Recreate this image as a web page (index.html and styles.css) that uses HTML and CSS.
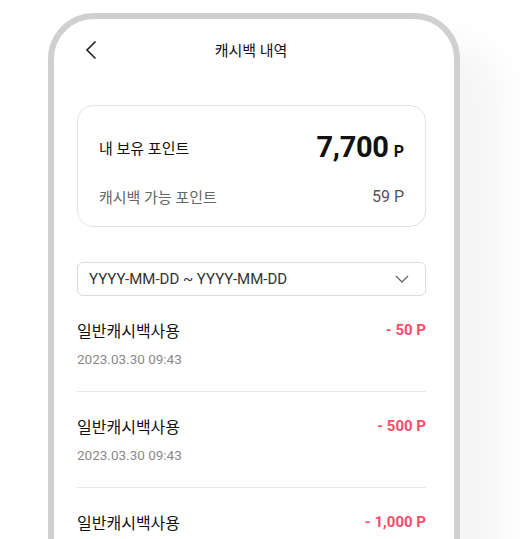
FILE: index.html
```html
<!DOCTYPE html>
<html lang="ko">
<head>
<meta charset="utf-8">
<link rel="stylesheet" href="styles.css">
</head>
<body>
<div class="phone">
  <header class="header">
    <svg class="back" width="12" height="20" viewBox="0 0 12 20"><path d="M10.5 1.5 L2 10 L10.5 18.5" fill="none" stroke="#222" stroke-width="1.6"/></svg>
    <h1 class="title">캐시백 내역</h1>
  </header>
  <main class="content">
    <section class="card">
      <div class="row">
        <span class="label">내 보유 포인트</span>
        <span class="total"><b>7,700</b><small>P</small></span>
      </div>
      <div class="row sub">
        <span class="label">캐시백 가능 포인트</span>
        <span class="avail">59 P</span>
      </div>
    </section>
    <div class="select">
      <span>YYYY-MM-DD ~ YYYY-MM-DD</span>
      <svg width="14" height="8" viewBox="0 0 14 8"><path d="M1 1 L7 7 L13 1" fill="none" stroke="#666" stroke-width="1.3"/></svg>
    </div>
    <ul class="list">
      <li class="item">
        <div class="item-top"><span class="name">일반캐시백사용</span><span class="amt">- 50 P</span></div>
        <div class="date">2023.03.30 09:43</div>
      </li>
      <li class="item">
        <div class="item-top"><span class="name">일반캐시백사용</span><span class="amt">- 500 P</span></div>
        <div class="date">2023.03.30 09:43</div>
      </li>
      <li class="item">
        <div class="item-top"><span class="name">일반캐시백사용</span><span class="amt">- 1,000 P</span></div>
        <div class="date">2023.03.30 09:43</div>
      </li>
    </ul>
  </main>
</div>
</body>
</html>
```

FILE: styles.css
```css
* { box-sizing: border-box; }
html, body { margin: 0; padding: 0; background: #fff; overflow: hidden; }
body {
  font-family: Roboto, "Noto Sans CJK KR", sans-serif;
  color: #111;
  width: 528px;
  height: 539px;
}
.phone {
  margin: 13px 0 0 48px;
  width: 412px;
  height: 620px;
  border: 6px solid #d0d0d0;
  border-radius: 46px;
  background: #fff;
  box-shadow: 40px 30px 40px rgba(0,0,0,0.045);
  overflow: hidden;
}
.header {
  height: 61px;
  display: flex;
  align-items: center;
  justify-content: center;
  position: relative;
}
.back { position: absolute; left: 31px; top: 21px; }
.title {
  margin: 0;
  font-size: 15px;
  font-weight: 400;
  color: #111;
  margin-left: -6px;
}
.content { padding: 25px 28px 0 23px; }
.card {
  border: 1px solid #e3e3e3;
  border-radius: 16px;
  padding: 24px 21px 19px 21px;
  height: 122px;
}
.row { display: flex; justify-content: space-between; align-items: center; height: 34px; }
.row.sub { margin-top: 21px; height: 22px; }
.label { font-size: 15px; color: #111; }
.sub .label { color: #666; }
.total b { font-size: 29px; font-weight: 700; letter-spacing: -0.3px; }
.total small { font-size: 16px; font-weight: 700; margin-left: 5px; }
.avail { font-size: 16px; color: #555; }
.select {
  margin-top: 35px;
  height: 34px;
  border: 1px solid #dcdcdc;
  border-radius: 6px;
  display: flex;
  align-items: center;
  justify-content: space-between;
  padding: 0 16px 0 11px;
  font-size: 15px;
  color: #333;
}
.list { list-style: none; margin: 0; padding: 0; }
.item { padding: 23px 0 22px; border-bottom: 1px solid #e8e8e8; }
.item-top { display: flex; justify-content: space-between; align-items: center; height: 22px; }
.name { font-size: 16px; color: #111; }
.amt { font-size: 15px; font-weight: 700; color: #fb4b6c; }
.date { margin-top: 8px; height: 20px; line-height: 20px; font-size: 13.5px; color: #8a8a8a; }
```
